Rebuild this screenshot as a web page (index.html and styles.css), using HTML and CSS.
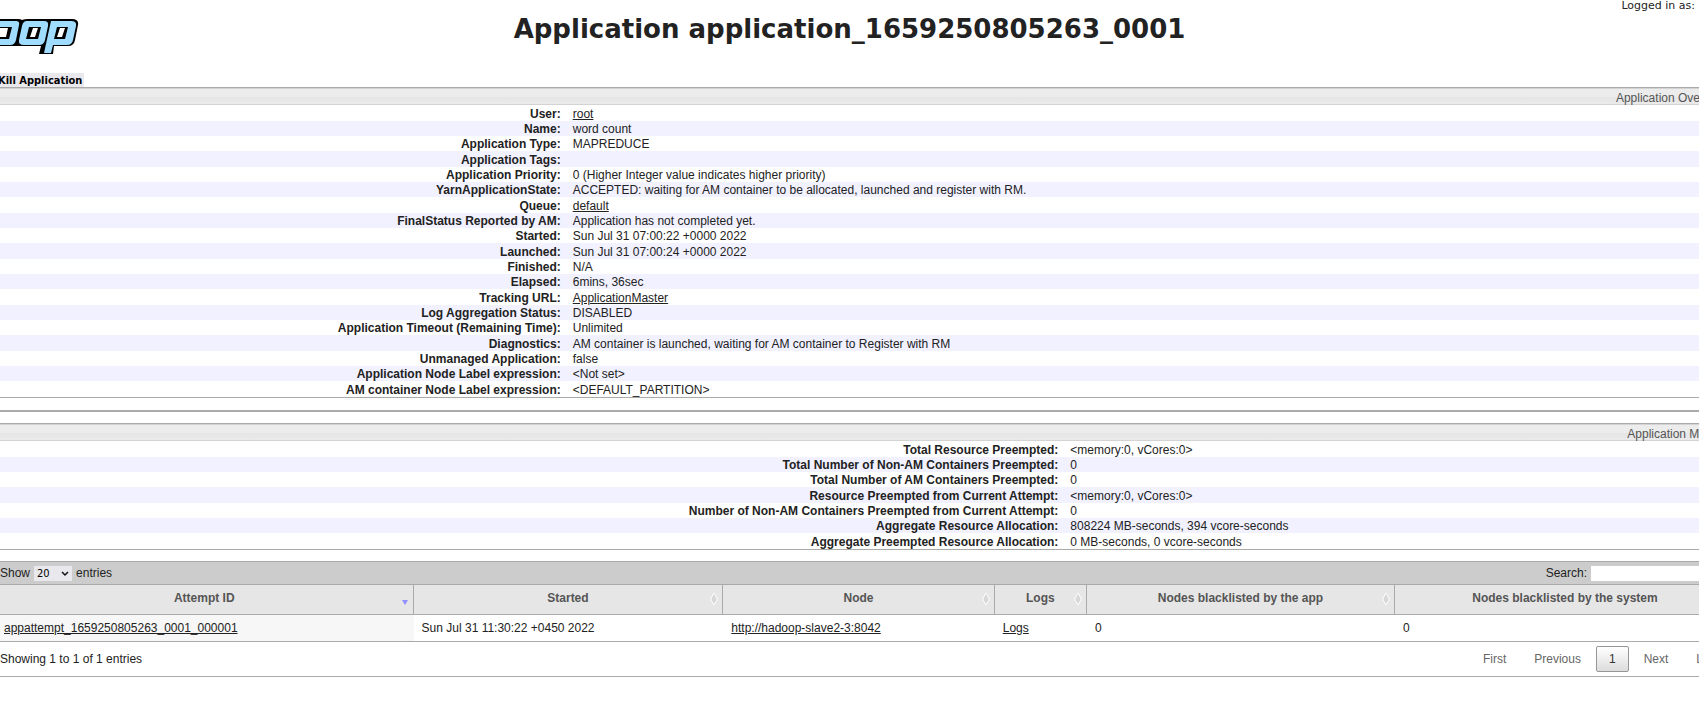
FILE: index.html
```html
<!DOCTYPE html>
<html lang="en">
<head>
  <meta charset="utf-8">
  <title>Application application_1659250805263_0001</title>
  <link rel="stylesheet" href="styles.css">
</head>
<body>
  <div class="page">
    <header class="header">
      <a class="logo" href="#" aria-label="Hadoop">
        <svg width="84" height="38" viewBox="-4 18 84 38">
          <g stroke-linejoin="round">
            <path d="M-4 19H18Q21 19 22 20Q24 19 28 19H72Q79 19 78 25L75 40Q74 46 68 46H54L53 54H39L41 46H-4Z" fill="#000"/>
            <path d="M-4 21H16Q20 21 19 25L16 40Q15 45 10 45H-4Z" fill="#9fdcff"/>
            <path d="M27 21H44Q49 21 48 26L45 40Q44 45 39 45H24Q18 45 19 40L22 26Q23 21 27 21Z" fill="#9fdcff"/>
            <path d="M51 21H71Q77 21 76 26L73 40Q72 45 67 45H53L51 53H44Z" fill="#9fdcff"/>
            <path d="M-4 27H12L9 39H-4ZM29 27H41L38 39H26ZM57 27H68L65 39H54Z" fill="#000"/>
            <path d="M-4 28H8L6 37H-4ZM33 28H38L35 37H30ZM60 28H65L62 37H57Z" fill="#fff"/>
          </g>
        </svg>
      </a>
      <h1>Application application_1659250805263_0001</h1>
      <div class="user">Logged in as:</div>
    </header>

    <div class="toolbar">
      <button class="kill">Kill Application</button>
    </div>

    <table class="info overview">
      <caption>Application Overview</caption>
      <tbody>
        <tr><th>User:</th><td><a href="#">root</a></td></tr>
        <tr><th>Name:</th><td>word count</td></tr>
        <tr><th>Application Type:</th><td>MAPREDUCE</td></tr>
        <tr><th>Application Tags:</th><td></td></tr>
        <tr><th>Application Priority:</th><td>0 (Higher Integer value indicates higher priority)</td></tr>
        <tr><th>YarnApplicationState:</th><td>ACCEPTED: waiting for AM container to be allocated, launched and register with RM.</td></tr>
        <tr><th>Queue:</th><td><a href="#">default</a></td></tr>
        <tr><th>FinalStatus Reported by AM:</th><td>Application has not completed yet.</td></tr>
        <tr><th>Started:</th><td>Sun Jul 31 07:00:22 +0000 2022</td></tr>
        <tr><th>Launched:</th><td>Sun Jul 31 07:00:24 +0000 2022</td></tr>
        <tr><th>Finished:</th><td>N/A</td></tr>
        <tr><th>Elapsed:</th><td>6mins, 36sec</td></tr>
        <tr><th>Tracking URL:</th><td><a href="#">ApplicationMaster</a></td></tr>
        <tr><th>Log Aggregation Status:</th><td>DISABLED</td></tr>
        <tr><th>Application Timeout (Remaining Time):</th><td>Unlimited</td></tr>
        <tr><th>Diagnostics:</th><td>AM container is launched, waiting for AM container to Register with RM</td></tr>
        <tr><th>Unmanaged Application:</th><td>false</td></tr>
        <tr><th>Application Node Label expression:</th><td>&lt;Not set&gt;</td></tr>
        <tr><th>AM container Node Label expression:</th><td>&lt;DEFAULT_PARTITION&gt;</td></tr>
      </tbody>
    </table>

    <hr class="divider">

    <table class="info metrics">
      <caption>Application Metrics</caption>
      <tbody>
        <tr><th>Total Resource Preempted:</th><td>&lt;memory:0, vCores:0&gt;</td></tr>
        <tr><th>Total Number of Non-AM Containers Preempted:</th><td>0</td></tr>
        <tr><th>Total Number of AM Containers Preempted:</th><td>0</td></tr>
        <tr><th>Resource Preempted from Current Attempt:</th><td>&lt;memory:0, vCores:0&gt;</td></tr>
        <tr><th>Number of Non-AM Containers Preempted from Current Attempt:</th><td>0</td></tr>
        <tr><th>Aggregate Resource Allocation:</th><td>808224 MB-seconds, 394 vcore-seconds</td></tr>
        <tr><th>Aggregate Preempted Resource Allocation:</th><td>0 MB-seconds, 0 vcore-seconds</td></tr>
      </tbody>
    </table>

    <section class="attempts-wrapper">
      <div class="filter-bar">
        <label class="length">Show
          <span class="select">
            <select><option>10</option><option selected>20</option><option>50</option></select>
            <svg width="8" height="6" viewBox="0 0 8 6"><path d="M1 1l3 3 3-3" fill="none" stroke="#111" stroke-width="1.5"/></svg>
          </span>
          entries</label>
        <label class="search">Search: <input type="text"></label>
      </div>

      <table class="attempts">
        <thead>
          <tr>
            <th class="col-id">Attempt ID
              <svg class="sort" width="8" height="14" viewBox="0 0 8 14"><path d="M1 8h6l-3 5z" fill="#9090ff"/></svg>
            </th>
            <th class="col-started">Started
              <svg class="sort" width="8" height="14" viewBox="0 0 8 14"><path d="M4 1l3 5v2l-3 5-3-5V6z" fill="#d8d8d8" stroke="#fff"/></svg>
            </th>
            <th class="col-node">Node
              <svg class="sort" width="8" height="14" viewBox="0 0 8 14"><path d="M4 1l3 5v2l-3 5-3-5V6z" fill="#d8d8d8" stroke="#fff"/></svg>
            </th>
            <th class="col-logs">Logs
              <svg class="sort" width="8" height="14" viewBox="0 0 8 14"><path d="M4 1l3 5v2l-3 5-3-5V6z" fill="#d8d8d8" stroke="#fff"/></svg>
            </th>
            <th class="col-app">Nodes blacklisted by the app
              <svg class="sort" width="8" height="14" viewBox="0 0 8 14"><path d="M4 1l3 5v2l-3 5-3-5V6z" fill="#d8d8d8" stroke="#fff"/></svg>
            </th>
            <th>Nodes blacklisted by the system</th>
          </tr>
        </thead>
        <tbody>
          <tr>
            <td class="sorted"><a href="#">appattempt_1659250805263_0001_000001</a></td>
            <td>Sun Jul 31 11:30:22 +0450 2022</td>
            <td><a href="#">http://hadoop-slave2-3:8042</a></td>
            <td><a href="#">Logs</a></td>
            <td>0</td>
            <td>0</td>
          </tr>
        </tbody>
      </table>

      <div class="pager-bar">
        <div>Showing 1 to 1 of 1 entries</div>
        <nav class="pager">
          <button>First</button>
          <button>Previous</button>
          <button class="current">1</button>
          <button>Next</button>
          <button>Last</button>
        </nav>
      </div>
    </section>
  </div>
</body>
</html>
```
FILE: styles.css
```css
* {
  box-sizing: border-box;
}

body {
  margin: 0;
  overflow: hidden;
  background: #fff;
  color: #222;
  font: 12px/15px Arial, "Liberation Sans", sans-serif;
}

a {
  color: #222;
}

/* the layout is slightly wider than the window on both sides */
.page {
  margin: 0 -37px 0 -4px;
}

.header {
  display: grid;
  grid-template-columns: 1fr auto 1fr;
  align-items: start;
  height: 73px;
  padding-right: 41px;
  padding-left: 8px;
}

.logo {
  margin-top: 18px;
  margin-left: -8px;
}

.logo svg {
  display: block;
}

h1 {
  margin: 13px 0 0;
  font: bold 26px/32px Verdana, "DejaVu Sans", sans-serif;
}

.user {
  justify-self: end;
  font: 11px/12px Verdana, "DejaVu Sans", sans-serif;
}

.toolbar {
  display: flex;
}

button {
  border: 0;
  padding: 0;
  font: inherit;
  cursor: pointer;
}

.kill {
  height: 14px;
  padding: 1px 2px 0;
  background: #e9e9ed;
  color: #000;
  font: bold 11px/13px Tahoma, "DejaVu Sans Condensed", sans-serif;
}

.info {
  width: 100%;
  border-collapse: separate;
  border-spacing: 0;
  border-bottom: 1px solid #aaa;
}

.info caption {
  height: 18px;
  padding: 2px 8px 0 0;
  border-top: 1px solid #aaa;
  border-bottom: 1px solid #d3d3d3;
  background: linear-gradient(#d3d3d3 1px, #ececec 1px, #ececec 9px, #e6e6e6 9px, #eaeaea);
  color: #555;
  line-height: 16px;
  text-align: right;
}

.info th,
.info td {
  height: 15px;
  padding: 1px 6px 0;
  line-height: 14px;
}

.info tr:nth-child(3n+1) > * {
  height: 16px;
}

.info th {
  text-align: right;
}

.info tr:nth-child(even) {
  background: #f1f1ff;
}

.overview th {
  width: 32.8%;
}

.metrics th {
  width: 61.4%;
}

.divider {
  height: 2px;
  margin: 12px 0 11px;
  border: 0;
  background: #aaa;
}

.attempts-wrapper {
  margin-top: 11px;
  border-top: 1px solid #aaa;
  border-bottom: 1px solid #aaa;
}

.filter-bar {
  display: flex;
  justify-content: space-between;
  align-items: center;
  height: 22px;
  padding-left: 4px;
  background: #ccc;
}

.length,
.search {
  display: flex;
  align-items: center;
  gap: 4px;
}

.select {
  position: relative;
}

.select select {
  display: block;
  width: 38px;
  height: 15px;
  padding: 0 3px;
  border: 0;
  background: #e9e9ed;
  color: #000;
  font: 11px/15px Tahoma, "DejaVu Sans Condensed", sans-serif;
  appearance: none;
}

.select svg {
  position: absolute;
  top: 5px;
  right: 3px;
  pointer-events: none;
}

.search input {
  width: 145px;
  height: 15px;
  padding: 0;
  border: 0;
  background: #fff;
}

.attempts {
  width: 100%;
  table-layout: fixed;
  border-collapse: separate;
  border-spacing: 0;
}

.attempts th {
  position: relative;
  height: 31px;
  padding: 0 0 2px;
  border: solid #aaa;
  border-width: 1px 1px 1px 0;
  background: #e6e6e6;
  color: #555;
}

.attempts td {
  height: 27px;
  padding: 0 8px;
  border-bottom: 1px solid #aaa;
}

.attempts .sorted {
  background: #f7f7f7;
}

.sort {
  position: absolute;
  top: 7px;
  right: 4px;
}

.col-id { width: 24%; }
.col-started { width: 17.8%; }
.col-node { width: 15.6%; }
.col-logs { width: 5.3%; }
.col-app { width: 17.7%; }

.pager-bar {
  display: flex;
  justify-content: space-between;
  align-items: center;
  height: 34px;
  padding: 0 4px;
}

.pager {
  display: flex;
  gap: 2px;
}

.pager button {
  height: 26px;
  padding: 0 12px;
  border: 1px solid transparent;
  border-radius: 2px;
  background: transparent;
  color: #666;
}

.pager .current {
  border-color: #979797;
  background: linear-gradient(#fff, #dcdcdc);
  color: #333;
}
```
